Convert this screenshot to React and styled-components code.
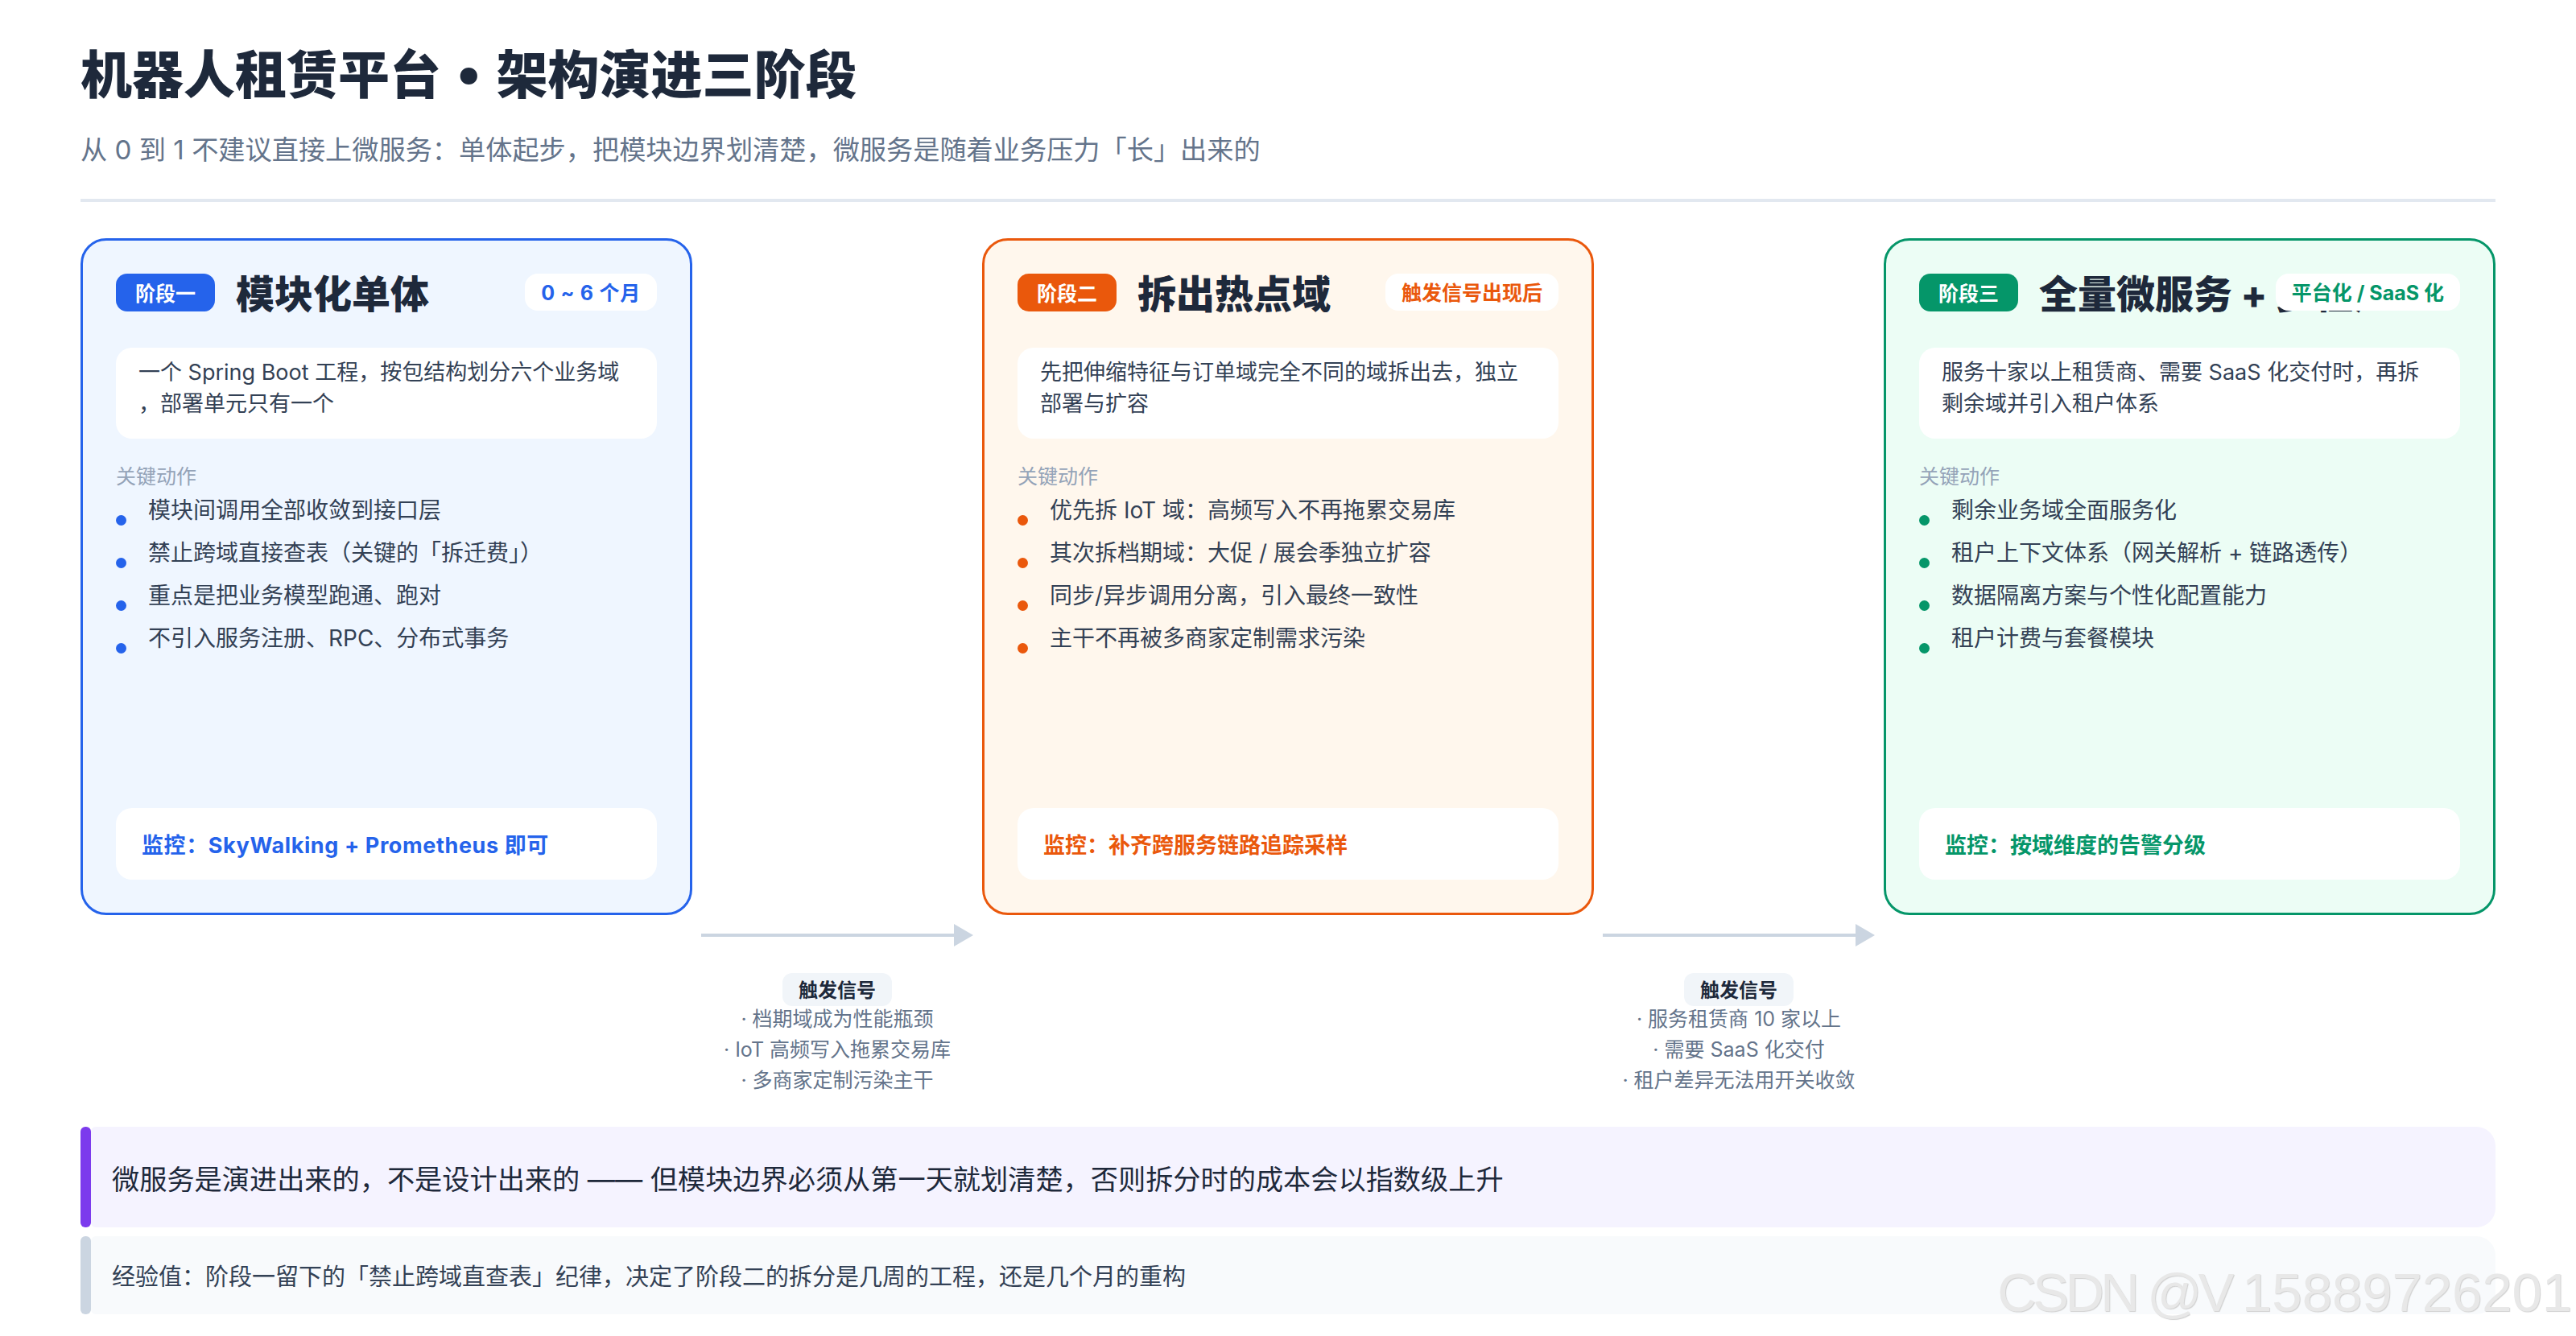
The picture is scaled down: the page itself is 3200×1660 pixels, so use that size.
import React from 'react';
import styled, { createGlobalStyle } from 'styled-components';

const GlobalStyle = createGlobalStyle`
  html, body {
    margin: 0;
    padding: 0;
    background: #fff;
  }
  * {
    box-sizing: border-box;
  }
`;

const themes = {
  blue: { main: '#2563eb', bg: '#eff6ff' },
  orange: { main: '#ea580c', bg: '#fff7ed' },
  green: { main: '#059669', bg: '#ecfdf5' },
};

const Page = styled.div`
  position: relative;
  width: 3200px;
  height: 1660px;
  padding: 52px 100px 0;
  overflow: hidden;
  font-family: Inter, "Noto Sans CJK SC", sans-serif;
`;

const Header = styled.header`
  padding-bottom: 37px;
  margin-bottom: 45px;
  border-bottom: 4px solid #e2e8f0;
`;

const Title = styled.h1`
  margin: 0 0 -4px;
  font-size: 64px;
  line-height: 82px;
  font-weight: 800;
  color: #1e293b;
`;

const TitleDot = styled.span`
  font-size: 115px;
  line-height: 0;
  vertical-align: -18px;
`;

const Subtitle = styled.p`
  margin: 32px 0 0;
  font-size: 33.2px;
  line-height: 48px;
  color: #64748b;
`;

const Board = styled.div`
  display: grid;
  grid-template-columns: 760px 360px 760px 360px 760px;
`;

const Card = styled.section`
  display: flex;
  flex-direction: column;
  min-height: 841px;
  padding: 41px;
  border: 3px solid ${p => p.$theme.main};
  border-radius: 32px;
  background: ${p => p.$theme.bg};
`;

const CardHead = styled.div`
  display: flex;
  align-items: flex-start;
  gap: 26px;
  height: 47px;
  margin-bottom: 45px;
`;

const Badge = styled.span`
  flex-shrink: 0;
  height: 47px;
  padding: 0 24px;
  border-radius: 14px;
  background: ${p => p.$theme.main};
  color: #fff;
  font-size: 25px;
  line-height: 50px;
  font-weight: 700;
`;

const CardTitle = styled.h2`
  flex: 1;
  min-width: 0;
  height: 47px;
  margin: 0;
  font-size: 48px;
  line-height: 51px;
  font-weight: 800;
  color: #1e293b;
  white-space: nowrap;
`;

const Period = styled.span`
  flex-shrink: 0;
  height: 46px;
  padding: 0 20px;
  border-radius: 16px;
  background: #fff;
  color: ${p => p.$theme.main};
  font-size: 25px;
  line-height: 49px;
  font-weight: 700;
  letter-spacing: ${p => p.$tracking || 0}px;
`;

const Desc = styled.p`
  height: 113px;
  margin: 0;
  padding: 11px 28px 0;
  border-radius: 20px;
  background: #fff;
  color: #334155;
  font-size: 27px;
  line-height: 39px;
  white-space: pre-line;
`;

const ActionsLabel = styled.div`
  margin-top: 29px;
  color: #94a3b8;
  font-size: 25px;
  line-height: 36px;
`;

const Actions = styled.ul`
  display: flex;
  flex-direction: column;
  gap: 14px;
  margin: 5px 0 0;
  padding: 0;
  list-style: none;
`;

const Action = styled.li`
  display: flex;
  align-items: flex-start;
  gap: 27px;
  color: #334155;
  font-size: 28px;
  line-height: 39px;
`;

const Bullet = styled.span`
  flex-shrink: 0;
  width: 13px;
  height: 13px;
  margin-top: 25px;
  border-radius: 50%;
  background: ${p => p.$theme.main};
`;

const Monitor = styled.div`
  display: flex;
  align-items: center;
  height: 89px;
  margin-top: auto;
  padding: 0 32px;
  border-radius: 20px;
  background: #fff;
  color: ${p => p.$theme.main};
  font-size: 27px;
  font-weight: 700;
  letter-spacing: ${p => p.$tracking || 0}px;
`;

const Connector = styled.div`
  display: flex;
  flex-direction: column;
  align-items: center;
  height: 263px;
  padding-top: 11px;
  grid-column: ${p => p.$col};
  grid-row: 2;
`;

const ArrowSvg = styled.svg`
  display: block;
  width: 338px;
  height: 28px;
`;

const TriggerTag = styled.span`
  height: 41px;
  margin: 33px 0 -3px;
  padding: 0 20px;
  border-radius: 12px;
  background: #f1f5f9;
  color: #1e293b;
  font-size: 24px;
  line-height: 44px;
  font-weight: 700;
`;

const TriggerLine = styled.div`
  color: #64748b;
  font-size: 25px;
  line-height: 38px;
`;

const Callout = styled.div`
  display: flex;
  height: ${p => p.$height}px;
  margin-top: ${p => p.$top}px;
`;

const CalloutBar = styled.span`
  flex-shrink: 0;
  width: 13px;
  border-radius: 6px;
  background: ${p => p.$color};
`;

const CalloutBody = styled.div`
  flex: 1;
  display: flex;
  align-items: center;
  padding: 0 0 ${p => p.$shift || 0}px 26px;
  border-radius: 6px 24px 24px 6px;
  background: ${p => p.$bg};
  color: ${p => p.$color};
  font-size: ${p => p.$size}px;
`;

const Watermark = styled.div`
  position: absolute;
  right: 5px;
  bottom: 18px;
  color: #e8e8e8;
  font-family: "Liberation Sans", Arial, sans-serif;
  font-size: 67px;
  line-height: 72px;
  white-space: nowrap;
  text-shadow: 1px 1px 1px #d0d0d0;
`;

const WatermarkName = styled.span`
  letter-spacing: -4.5px;
`;

const stages = [
  {
    theme: themes.blue,
    badge: '阶段一',
    title: '模块化单体',
    period: '0 ~ 6 个月',
    periodTracking: 0.75,
    desc: '一个 Spring Boot 工程，按包结构划分六个业务域\n，部署单元只有一个',
    actions: [
      '模块间调用全部收敛到接口层',
      '禁止跨域直接查表（关键的「拆迁费」）',
      '重点是把业务模型跑通、跑对',
      '不引入服务注册、RPC、分布式事务',
    ],
    monitor: '监控：SkyWalking + Prometheus 即可',
    tracking: 0.6,
  },
  {
    theme: themes.orange,
    badge: '阶段二',
    title: '拆出热点域',
    period: '触发信号出现后',
    desc: '先把伸缩特征与订单域完全不同的域拆出去，独立\n部署与扩容',
    actions: [
      '优先拆 IoT 域：高频写入不再拖累交易库',
      '其次拆档期域：大促 / 展会季独立扩容',
      '同步/异步调用分离，引入最终一致性',
      '主干不再被多商家定制需求污染',
    ],
    monitor: '监控：补齐跨服务链路追踪采样',
  },
  {
    theme: themes.green,
    badge: '阶段三',
    title: '全量微服务 + 多租户',
    period: '平台化 / SaaS 化',
    desc: '服务十家以上租赁商、需要 SaaS 化交付时，再拆\n剩余域并引入租户体系',
    actions: [
      '剩余业务域全面服务化',
      '租户上下文体系（网关解析 + 链路透传）',
      '数据隔离方案与个性化配置能力',
      '租户计费与套餐模块',
    ],
    monitor: '监控：按域维度的告警分级',
  },
];

const triggers = [
  { col: 2, lines: ['档期域成为性能瓶颈', 'IoT 高频写入拖累交易库', '多商家定制污染主干'] },
  { col: 4, lines: ['服务租赁商 10 家以上', '需要 SaaS 化交付', '租户差异无法用开关收敛'] },
];

const StageCard = ({ stage }) => (
  <Card $theme={stage.theme}>
    <CardHead>
      <Badge $theme={stage.theme}>{stage.badge}</Badge>
      <CardTitle>{stage.title}</CardTitle>
      <Period $theme={stage.theme} $tracking={stage.periodTracking}>{stage.period}</Period>
    </CardHead>
    <Desc>{stage.desc}</Desc>
    <ActionsLabel>关键动作</ActionsLabel>
    <Actions>
      {stage.actions.map(text => (
        <Action key={text}>
          <Bullet $theme={stage.theme} />
          <span>{text}</span>
        </Action>
      ))}
    </Actions>
    <Monitor $theme={stage.theme} $tracking={stage.tracking}>{stage.monitor}</Monitor>
  </Card>
);

const Arrow = () => (
  <ArrowSvg viewBox="0 0 338 28">
    <rect x="0" y="12" width="316" height="4" fill="#cbd5e1" />
    <polygon points="314,0 338,14 314,28" fill="#cbd5e1" />
  </ArrowSvg>
);

export default function App() {
  return (
    <Page>
      <GlobalStyle />
      <Header>
        <Title>机器人租赁平台 <TitleDot>·</TitleDot> 架构演进三阶段</Title>
        <Subtitle>从 0 到 1 不建议直接上微服务：单体起步，把模块边界划清楚，微服务是随着业务压力「长」出来的</Subtitle>
      </Header>
      <Board>
        <StageCard stage={stages[0]} />
        <div />
        <StageCard stage={stages[1]} />
        <div />
        <StageCard stage={stages[2]} />
        {triggers.map(t => (
          <Connector key={t.col} $col={t.col}>
            <Arrow />
            <TriggerTag>触发信号</TriggerTag>
            {t.lines.map(line => (
              <TriggerLine key={line}>· {line}</TriggerLine>
            ))}
          </Connector>
        ))}
      </Board>
      <Callout $height={125} $top={0}>
        <CalloutBar $color="#7c3aed" />
        <CalloutBody $bg="#f5f3ff" $color="#1e293b" $size={34.2}>
          微服务是演进出来的，不是设计出来的 —— 但模块边界必须从第一天就划清楚，否则拆分时的成本会以指数级上升
        </CalloutBody>
      </Callout>
      <Callout $height={97} $top={11}>
        <CalloutBar $color="#cbd5e1" />
        <CalloutBody $bg="#f8fafc" $color="#334155" $size={29} $shift={2}>
          经验值：阶段一留下的「禁止跨域直查表」纪律，决定了阶段二的拆分是几周的工程，还是几个月的重构
        </CalloutBody>
      </Callout>
      <Watermark><WatermarkName>CSDN @V </WatermarkName>15889726201</Watermark>
    </Page>
  );
}
